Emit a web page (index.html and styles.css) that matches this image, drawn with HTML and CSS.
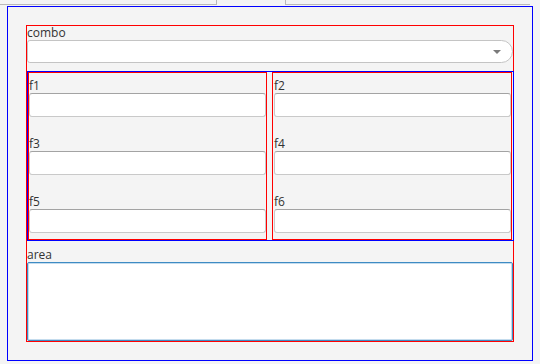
FILE: index.html
```html
<!DOCTYPE html>
<html lang="en">
<head>
    <meta charset="UTF-8">
    <meta name="viewport" content="width=device-width, initial-scale=1.0">
    <title>Form layout</title>
    <link rel="stylesheet" href="styles.css">
</head>
<body>

    <div class="tabs">
        <div class="tab-fill tab-left"></div>
        <div class="tab active"></div>
        <div class="tab-fill tab-right"></div>
    </div>

    <div class="panel">
        <div class="form">
            <label class="label">combo</label>
            <div class="combo">
                <span class="arrow"></span>
            </div>

            <div class="grid">
                <div class="column">
                    <div class="field">
                        <label class="label">f1</label>
                        <input type="text" class="input">
                    </div>
                    <div class="field">
                        <label class="label">f3</label>
                        <input type="text" class="input">
                    </div>
                    <div class="field">
                        <label class="label">f5</label>
                        <input type="text" class="input">
                    </div>
                </div>
                <div class="column">
                    <div class="field">
                        <label class="label">f2</label>
                        <input type="text" class="input">
                    </div>
                    <div class="field">
                        <label class="label">f4</label>
                        <input type="text" class="input">
                    </div>
                    <div class="field">
                        <label class="label">f6</label>
                        <input type="text" class="input">
                    </div>
                </div>
            </div>

            <label class="label label-area">area</label>
            <textarea class="area"></textarea>
        </div>
    </div>

</body>
</html>
```

FILE: styles.css
```css
/* basic page */
body {
    margin: 0;
    background-color: #f4f4f4;
    font-family: 'Open Sans', 'DejaVu Sans', sans-serif;
    font-size: 12px;
    color: #333;
}

/* tab strip on top */
.tabs {
    display: flex;
    height: 5px;
}
.tab-fill {
    border-bottom: 1px solid #b9b9b9;
    box-sizing: border-box;
}
.tab-left {
    width: 216px;
}
.tab-right {
    width: 244px;
}
.tab {
    width: 70px;
    box-sizing: border-box;
    border-left: 1px solid #b9b9b9;
    border-right: 1px solid #b9b9b9;
}

/* outer blue panel */
.panel {
    margin: 1px 0 0 7px;
    width: 526px;
    height: 355px;
    box-sizing: border-box;
    border: 1px solid #0000ff;
    padding: 18px;
}
.form {
    height: 100%;
    box-sizing: border-box;
    border: 1px solid #ff0000;
    display: flex;
    flex-direction: column;
}

.label {
    display: block;
    height: 14px;
    line-height: 14px;
}

.combo {
    position: relative;
    height: 23px;
    box-sizing: border-box;
    background: #fff;
    border: 1px solid #c4c4c4;
    border-radius: 3px 12px 12px 3px;
}
.arrow {
    position: absolute;
    right: 11px;
    top: 9px;
    width: 0;
    height: 0;
    border-left: 4px solid transparent;
    border-right: 4px solid transparent;
    border-top: 4px solid #7a7a7a;
}

/* two column block */
.grid {
    margin: 8px -1px 0 0;
    border: 1px solid #0000ff;
    display: grid;
    grid-template-columns: 239px 240px;
    column-gap: 5px;
}
.column {
    border: 1px solid #ff0000;
    padding: 6px 0 6px 0;
    display: flex;
    flex-direction: column;
    gap: 20px;
}
.column + .column {
    padding-left: 1px;
}
.field {
    display: flex;
    flex-direction: column;
}
.input {
    display: block;
    margin: 0;
    height: 24px;
    box-sizing: border-box;
    background: #fff;
    border: 1px solid #c9c9c9;
    border-top-color: #a3a3a3;
    border-radius: 3px;
}

.label-area {
    margin-top: 7px;
}
.area {
    display: block;
    margin: 0;
    flex: 1;
    resize: none;
    box-sizing: border-box;
    background: #fff;
    border: 1px solid #3e8bc3;
    box-shadow: inset 0 0 0 1px #c4dcee;
    border-radius: 2px;
}
```
